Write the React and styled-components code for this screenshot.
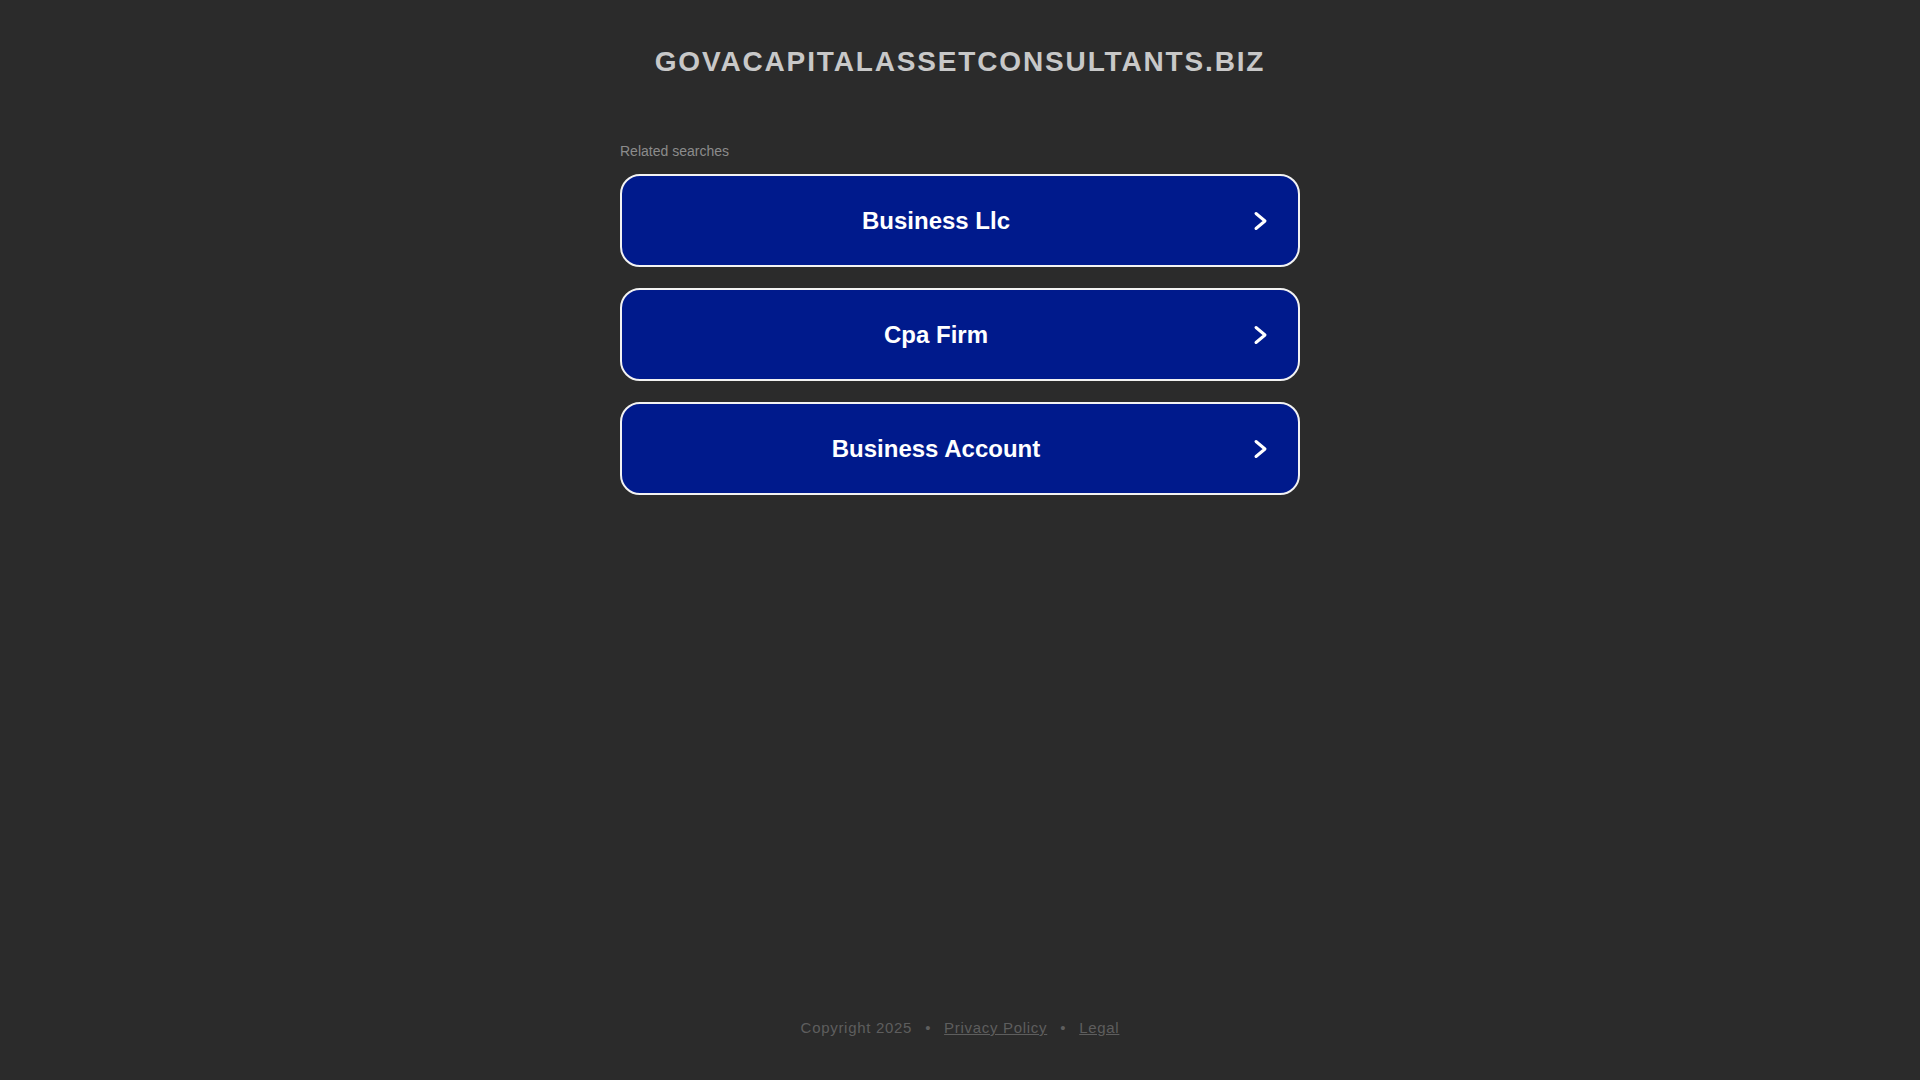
import React from "react";
import styled, { createGlobalStyle } from "styled-components";

const GlobalStyle = createGlobalStyle`
  html, body {
    margin: 0;
    padding: 0;
    background-color: #2b2b2b;
  }
  body {
    font-family: "Liberation Sans", Arial, sans-serif;
  }
`;

const Page = styled.div`
  min-height: 100vh;
  display: flex;
  flex-direction: column;
  align-items: center;
  box-sizing: border-box;
  padding-top: 48px;
  padding-bottom: 45px;
`;

const DomainName = styled.h1`
  margin: 0;
  font-size: 28px;
  line-height: 28px;
  font-weight: bold;
  letter-spacing: 1.85px;
  color: #c8c8c8;
  text-transform: uppercase;
`;

const Searches = styled.div`
  width: 680px;
  margin-top: 68px;
  display: flex;
  flex-direction: column;
`;

const Caption = styled.div`
  font-size: 14px;
  line-height: 14px;
  color: #8c8c8c;
  margin-bottom: 16px;
`;

const LinkBox = styled.a`
  display: flex;
  align-items: center;
  box-sizing: border-box;
  height: 93px;
  margin-bottom: 21px;
  padding: 0 29px 0 20px;
  border: 2px solid #f2f2f2;
  border-radius: 20px;
  background-color: #001a8c;
  color: #ffffff;
  text-decoration: none;
  cursor: pointer;
`;

const Label = styled.span`
  flex: 1;
  text-align: center;
  font-size: 24px;
  font-weight: bold;
`;

const Arrow = styled.svg`
  flex: none;
  width: 16px;
  height: 22px;
  margin-left: 23px;
`;

const Footer = styled.footer`
  margin-top: auto;
  display: flex;
  align-items: center;
  font-size: 15px;
  line-height: 15px;
  letter-spacing: 0.7px;
  color: #5e5e5e;
`;

const Dot = styled.span`
  margin: 0 13px;
`;

const FooterLink = styled.a`
  color: #5e5e5e;
  text-decoration: underline;
`;

const searches = ["Business Llc", "Cpa Firm", "Business Account"];

const App = () => {
  return (
    <>
      <GlobalStyle />
      <Page>
        <DomainName>govacapitalassetconsultants.biz</DomainName>
        <Searches>
          <Caption>Related searches</Caption>
          {searches.map((term) => (
            <LinkBox key={term}>
              <Label>{term}</Label>
              <Arrow viewBox="0 0 16 22">
                <polyline
                  points="3,3.5 12,11 3,18.5"
                  fill="none"
                  stroke="#ffffff"
                  strokeWidth="3"
                  strokeLinecap="round"
                  strokeLinejoin="round"
                />
              </Arrow>
            </LinkBox>
          ))}
        </Searches>
        <Footer>
          <span>Copyright 2025</span>
          <Dot>•</Dot>
          <FooterLink>Privacy Policy</FooterLink>
          <Dot>•</Dot>
          <FooterLink>Legal</FooterLink>
        </Footer>
      </Page>
    </>
  );
};

export default App;
